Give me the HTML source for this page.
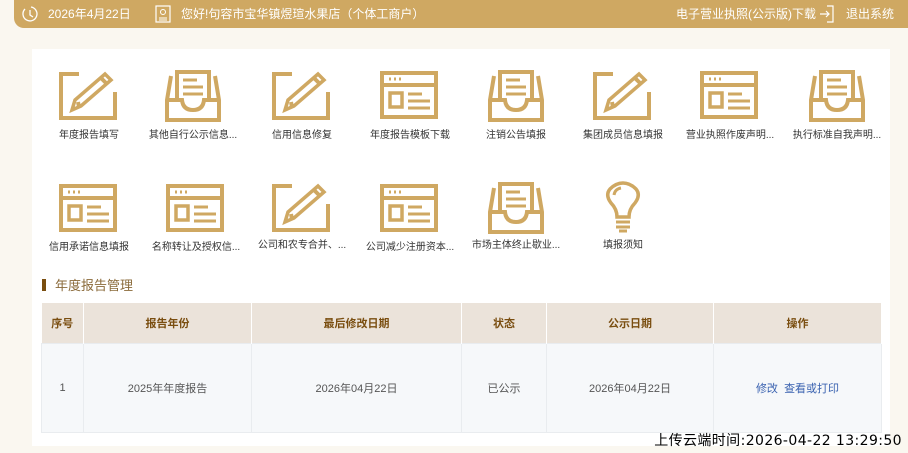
<!DOCTYPE html>
<html><head><meta charset="utf-8"><style>
*{margin:0;padding:0;box-sizing:border-box}
body{width:908px;height:453px;background:#faf7f0;font-family:"Liberation Sans","Noto Sans CJK SC",sans-serif;position:relative;overflow:hidden;color:#333}
.hdr{position:absolute;left:14px;top:0;width:894px;height:28px;background:#cfa862;border-bottom-left-radius:10px;color:#fff;font-size:12px}
.hdr span{position:absolute;top:7px;line-height:14px}
.panel{position:absolute;left:32px;top:49px;width:858px;height:397px;background:#fff}
.it{position:absolute;width:110px;text-align:center;font-size:10px;color:#333}
.it svg{display:block;margin:0 auto}
.it div{margin-top:4px;white-space:nowrap}
.title{position:absolute;left:42px;top:275px;font-size:13px;color:#8a6a3a}
.title i{display:inline-block;width:4px;height:12px;background:#7a4e10;margin-right:9px;vertical-align:-1px}
table{position:absolute;left:41px;top:303px;width:841px;border-collapse:collapse;font-size:11px;text-align:center}
th{background:#ebe3da;height:40px;color:#7a4e10;font-weight:bold;border-right:1px solid #fff}
td{background:#f6f8fa;height:89px;color:#555;border:1px solid #e9ecef}
a{color:#3a62b0;text-decoration:none}
.up{position:absolute;right:6px;top:430px;font-size:14px;color:#000;font-family:"DejaVu Sans","Noto Sans CJK SC",sans-serif;letter-spacing:0.4px}
</style></head><body>
<svg width="0" height="0" style="position:absolute">
<defs>
<g id="pen" fill="none" stroke="#cfa862" stroke-width="4">
<path d="M20 4H2V48H56V22"/>
<path d="M13 40L16 30L46 4L52 10L22 36Z" stroke-width="3.5"/><path d="M42 8L48 14M19 32L20 37"/>
</g>
<g id="box" fill="none" stroke="#cfa862" stroke-width="4">
<path d="M14 28V2H46V28"/><path d="M20 10H34M20 17H40M20 24H40" stroke-width="3"/>
<path d="M8 6L4 30V50H56V30L52 6"/><path d="M4 30H19Q20 40 30 40Q40 40 41 30H56"/>
</g>
<g id="win" fill="none" stroke="#cfa862">
<rect x="2" y="2" width="54" height="44" stroke-width="4"/>
<path d="M2 14H56" stroke-width="4"/>
<path d="M9 8H11M14 8H16M19 8H21" stroke-width="3"/>
<rect x="10" y="22" width="12" height="14" stroke-width="3.5"/>
<path d="M28 23H42M28 30H50M28 37H50" stroke-width="3"/>
</g>
<g id="bulb" fill="none" stroke="#cfa862" stroke-width="3.5">
<path d="M20 36Q20 28 14 22Q8 14 13 8Q19 2 26 2Q33 2 39 8Q44 14 38 22Q32 28 32 36Z"/>
<path d="M17 14Q18 8 24 7" stroke-width="3"/>
<path d="M19 41H33M19 46H33M22 50H30" stroke-width="3"/>
</g>
</defs></svg>
<div class="hdr">
<svg style="position:absolute;left:8px;top:5px" width="18" height="18" viewBox="0 0 18 18"><path d="M3 4A7 7 0 1 0 9 2" fill="none" stroke="#fff" stroke-width="1.3"/><path d="M8 5V10L11 12" fill="none" stroke="#fff" stroke-width="1.3"/></svg>
<span style="left:34px">2026年4月22日</span>
<svg style="position:absolute;left:141px;top:5px" width="16" height="18" viewBox="0 0 16 18"><rect x="1" y="1" width="14" height="16" fill="none" stroke="#fff" stroke-width="1.2"/><circle cx="8" cy="7" r="2.5" fill="none" stroke="#fff"/><path d="M4 13H12M4 15H12" stroke="#fff"/></svg>
<span style="left:167px">您好!句容市宝华镇煜瑄水果店（个体工商户）</span>
<span style="left:662px">电子营业执照(公示版)下载</span>
<svg style="position:absolute;left:805px;top:5px" width="16" height="18" viewBox="0 0 16 18"><path d="M8 1H14V17H8" fill="none" stroke="#fff" stroke-width="1.2"/><path d="M1 9H10M7 6L10 9L7 12" fill="none" stroke="#fff" stroke-width="1.2"/></svg>
<span style="left:832px">退出系统</span>
</div>
<div class="panel"></div>
<div class="it" style="left:34px;top:70px"><svg width="60" height="52" viewBox="0 0 60 52"><use href="#pen"/></svg><div>年度报告填写</div></div>
<div class="it" style="left:138px;top:70px"><svg width="60" height="52" viewBox="0 0 60 52"><use href="#box"/></svg><div>其他自行公示信息...</div></div>
<div class="it" style="left:247px;top:70px"><svg width="60" height="52" viewBox="0 0 60 52"><use href="#pen"/></svg><div>信用信息修复</div></div>
<div class="it" style="left:355px;top:71px"><svg width="60" height="50" viewBox="0 0 60 50"><use href="#win"/></svg><div style="margin-top:5px">年度报告模板下载</div></div>
<div class="it" style="left:461px;top:70px"><svg width="60" height="52" viewBox="0 0 60 52"><use href="#box"/></svg><div>注销公告填报</div></div>
<div class="it" style="left:568px;top:70px"><svg width="60" height="52" viewBox="0 0 60 52"><use href="#pen"/></svg><div>集团成员信息填报</div></div>
<div class="it" style="left:675px;top:71px"><svg width="60" height="50" viewBox="0 0 60 50"><use href="#win"/></svg><div style="margin-top:5px">营业执照作废声明...</div></div>
<div class="it" style="left:782px;top:70px"><svg width="60" height="52" viewBox="0 0 60 52"><use href="#box"/></svg><div>执行标准自我声明...</div></div>
<div class="it" style="left:34px;top:184px"><svg width="60" height="50" viewBox="0 0 60 50"><use href="#win"/></svg><div style="margin-top:4px">信用承诺信息填报</div></div>
<div class="it" style="left:141px;top:184px"><svg width="60" height="50" viewBox="0 0 60 50"><use href="#win"/></svg><div style="margin-top:4px">名称转让及授权信...</div></div>
<div class="it" style="left:247px;top:182px"><svg width="60" height="52" viewBox="0 0 60 52"><use href="#pen"/></svg><div style="margin-top:2px">公司和农专合并、...</div></div>
<div class="it" style="left:355px;top:184px"><svg width="60" height="50" viewBox="0 0 60 50"><use href="#win"/></svg><div style="margin-top:4px">公司减少注册资本...</div></div>
<div class="it" style="left:461px;top:182px"><svg width="60" height="52" viewBox="0 0 60 52"><use href="#box"/></svg><div style="margin-top:2px">市场主体终止歇业...</div></div>
<div class="it" style="left:568px;top:181px"><svg width="52" height="54" viewBox="0 0 52 54"><use href="#bulb"/></svg><div style="margin-top:1px">填报须知</div></div>
<div class="title"><i></i>年度报告管理</div>
<table>
<tr><th style="width:42px">序号</th><th style="width:168px">报告年份</th><th style="width:210px">最后修改日期</th><th style="width:85px">状态</th><th style="width:167px">公示日期</th><th>操作</th></tr>
<tr><td>1</td><td>2025年年度报告</td><td>2026年04月22日</td><td>已公示</td><td>2026年04月22日</td><td><a>修改</a>&nbsp;&nbsp;<a>查看或打印</a></td></tr>
</table>
<div class="up">上传云端时间:2026-04-22 13:29:50</div>
</body></html>
